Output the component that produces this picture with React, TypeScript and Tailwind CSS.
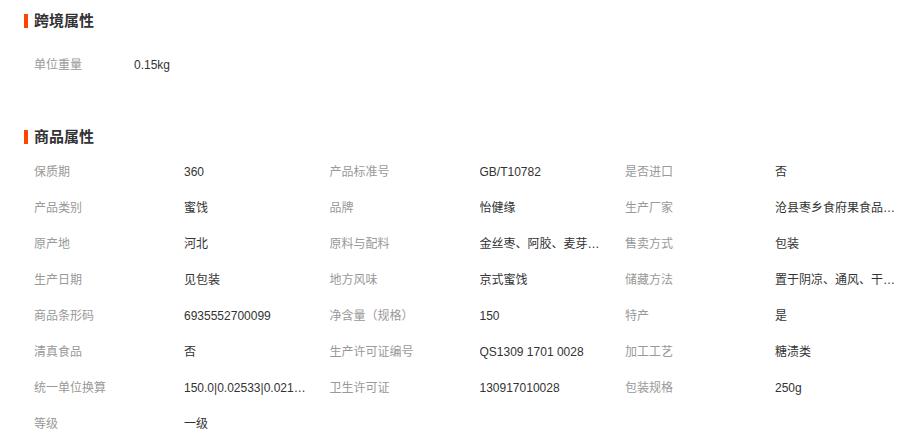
import React from "react";

const font = { fontFamily: '"Liberation Sans", Arial, "Noto Sans CJK SC", sans-serif' };

const rows: [string, string][][] = [
  [["保质期", "360"], ["产品标准号", "GB/T10782"], ["是否进口", "否"]],
  [["产品类别", "蜜饯"], ["品牌", "怡健缘"], ["生产厂家", "沧县枣乡食府果食品有限公司"]],
  [["原产地", "河北"], ["原料与配料", "金丝枣、阿胶、麦芽糖、白砂糖"], ["售卖方式", "包装"]],
  [["生产日期", "见包装"], ["地方风味", "京式蜜饯"], ["储藏方法", "置于阴凉、通风、干燥处"]],
  [["商品条形码", "6935552700099"], ["净含量（规格）", "150"], ["特产", "是"]],
  [["清真食品", "否"], ["生产许可证编号", "QS1309 1701 0028"], ["加工工艺", "糖渍类"]],
  [["统一单位换算", "150.0|0.02533|0.02165|0.0125"], ["卫生许可证", "130917010028"], ["包装规格", "250g"]],
  [["等级", "一级"]],
];

function Title({ text }: { text: string }) {
  return (
    <div className="flex items-center h-full">
      <span className="w-[4px] h-[14px] bg-[#ff4400] mr-[6px]" />
      <span className="text-[15px] font-bold text-[#333]">{text}</span>
    </div>
  );
}

export default function App() {
  return (
    <div className="w-[906px] h-[440px] bg-white pl-[24px] pt-[1px] text-[12px] overflow-hidden" style={font}>
      <div className="h-[40px]">
        <Title text="跨境属性" />
      </div>
      <div className="mt-[6px] h-[36px] flex items-center pl-[10px]">
        <span className="w-[100px] text-[#999]">单位重量</span>
        <span className="text-[#333]">0.15kg</span>
      </div>
      <div className="mt-[37px] h-[34px]">
        <Title text="商品属性" />
      </div>
      <div className="pl-[10px]">
        {rows.map((r, i) => (
          <div key={i} className="flex h-[36px] items-center">
            {r.map(([k, v], j) => (
              <div key={j} className="flex w-[295.5px] shrink-0 items-center">
                <span className="w-[150px] shrink-0 text-[#999]">{k}</span>
                <span className="w-[122px] truncate text-[#333]">{v}</span>
              </div>
            ))}
          </div>
        ))}
      </div>
    </div>
  );
}
